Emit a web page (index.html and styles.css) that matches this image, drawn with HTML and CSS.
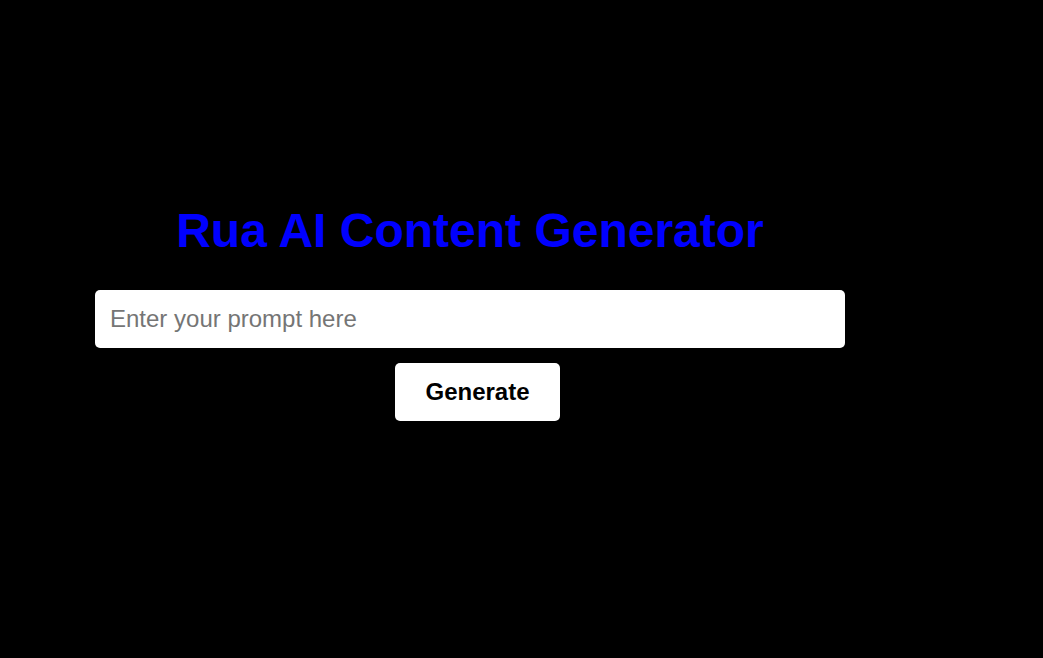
FILE: index.html
```html
<!DOCTYPE html>
<html lang="en">
<head>
<meta charset="utf-8">
<title>Rua AI Content Generator</title>
<link rel="stylesheet" href="styles.css">
</head>
<body>
<main class="app">
  <h1 class="title">Rua AI Content Generator</h1>
  <input class="prompt" type="text" placeholder="Enter your prompt here">
  <div class="actions">
    <button class="generate" type="button">Generate</button>
  </div>
</main>
</body>
</html>
```
FILE: styles.css
```css
html, body {
  margin: 0;
  padding: 0;
  background: #000;
  height: 100%;
}
body {
  font-family: "Liberation Sans", Arial, sans-serif;
}
.app {
  width: 750px;
  margin-left: 95px;
  padding-top: 203px;
}
.title {
  margin: 0 0 32px;
  text-align: center;
  color: #0000ff;
  font-size: 48px;
  font-weight: bold;
  line-height: 55px;
}
.prompt {
  display: block;
  box-sizing: border-box;
  width: 750px;
  height: 58px;
  padding: 15px;
  border: 0;
  border-radius: 5px;
  background: #fff;
  font-family: "Liberation Sans", Arial, sans-serif;
  font-size: 24px;
  color: #000;
  outline: none;
}
.prompt::placeholder {
  color: #757575;
}
.actions {
  display: flex;
  justify-content: center;
  padding-left: 15px;
  margin-top: 15px;
}
.generate {
  box-sizing: border-box;
  height: 58px;
  width: 165px;
  padding: 0;
  border: 0;
  border-radius: 5px;
  background: #fff;
  color: #000;
  font-family: "Liberation Sans", Arial, sans-serif;
  font-size: 24px;
  font-weight: bold;
  cursor: pointer;
}
```
